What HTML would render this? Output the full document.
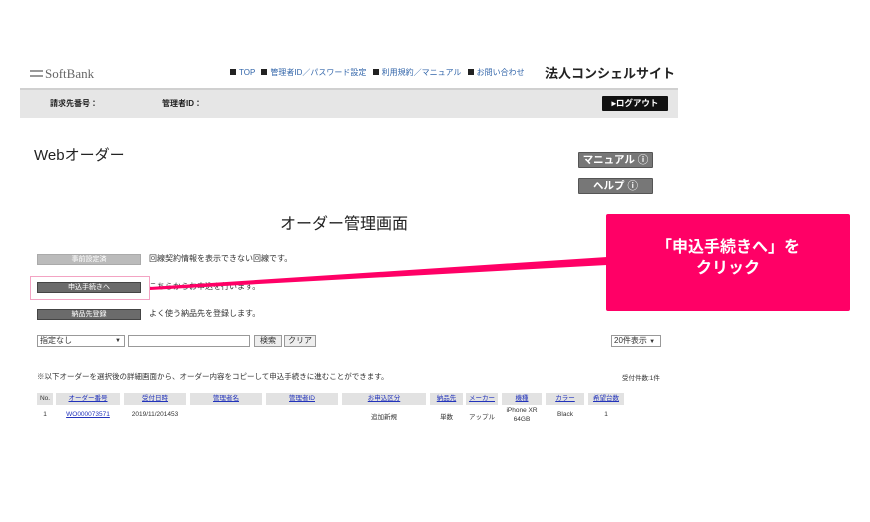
<!DOCTYPE html>
<html><head><meta charset="utf-8"><style>
*{margin:0;padding:0;box-sizing:border-box}
body{width:870px;height:522px;background:#fff;position:relative;overflow:hidden;font-family:"Liberation Sans","Noto Sans CJK JP",sans-serif;color:#333}
.a{position:absolute;white-space:nowrap}
.btn{position:absolute;background:#6b6b6b;color:#fff;font-size:7px;text-align:center;border:1px solid #444;line-height:10px}
.gb{position:absolute;background:#777;color:#fff;font-size:10.5px;font-weight:bold;text-align:center;border:1px solid #555;line-height:14px;border-radius:1px}
.th{position:absolute;top:393px;height:12px;background:#e2e2e2;color:#2233bb;font-size:6.5px;text-align:center;line-height:12px;text-decoration:underline}
.td{position:absolute;top:411px;font-size:6.5px;color:#333;text-align:center}
.nav{font-size:8px;color:#3366aa}
.sq{display:inline-block;width:6px;height:6px;background:#222;margin:0 3px 0 4px;vertical-align:0}
</style></head><body>
<div class="a" style="left:30px;top:66px;font-family:'Liberation Serif',serif;font-size:13px;color:#666"><span style="display:inline-block;width:13px;height:7px;border-top:2px solid #999;border-bottom:2px solid #999;margin-right:2px;vertical-align:1px"></span>SoftBank</div>
<div class="a nav" style="left:226px;top:67px"><span class="sq"></span>TOP <span class="sq"></span>管理者ID／パスワード設定 <span class="sq"></span>利用規約／マニュアル <span class="sq"></span>お問い合わせ</div>
<div class="a" style="left:545px;top:63px;font-size:13px;font-weight:bold;color:#222">法人コンシェルサイト</div>
<div class="a" style="left:20px;top:88px;width:658px;height:30px;background:#e6e6e6;border-top:2px solid #d0d0d0"></div>
<div class="a" style="left:50px;top:98px;font-size:8px;font-weight:bold;color:#222">請求先番号：</div>
<div class="a" style="left:162px;top:98px;font-size:8px;font-weight:bold;color:#222">管理者ID：</div>
<div class="a" style="left:602px;top:96px;width:66px;height:15px;background:#111;color:#fff;font-size:8.5px;font-weight:bold;text-align:center;line-height:15px;border-radius:1px">▸ログアウト</div>
<div class="a" style="left:34px;top:144px;font-size:15px;color:#222">Webオーダー</div>
<div class="gb" style="left:578px;top:152px;width:75px;height:16px">マニュアル ⓘ</div>
<div class="gb" style="left:578px;top:178px;width:75px;height:16px">ヘルプ ⓘ</div>
<div class="a" style="left:280px;top:210px;font-size:16px;color:#222">オーダー管理画面</div>
<div class="btn" style="left:37px;top:254px;width:104px;height:11px;background:#bbb;border-color:#aaa">事前設定済</div>
<div class="a" style="left:149px;top:253px;font-size:8px">回線契約情報を表示できない回線です。</div>
<div class="a" style="left:30px;top:276px;width:120px;height:24px;border:1px solid #f3a3c3"></div>
<div class="btn" style="left:37px;top:282px;width:104px;height:11px">申込手続きへ</div>
<div class="a" style="left:149px;top:281px;font-size:8px">こちらからお申込を行います。</div>
<div class="btn" style="left:37px;top:309px;width:104px;height:11px">納品先登録</div>
<div class="a" style="left:149px;top:308px;font-size:8px">よく使う納品先を登録します。</div>
<div class="a" style="left:37px;top:335px;width:88px;height:12px;border:1px solid #999;font-size:8px;line-height:10px;padding-left:2px">指定なし<span style="position:absolute;right:3px;font-size:6px">▼</span></div>
<div class="a" style="left:128px;top:335px;width:122px;height:12px;border:1px solid #999"></div>
<div class="a" style="left:254px;top:335px;width:28px;height:12px;border:1px solid #999;background:#eee;font-size:8px;text-align:center;line-height:10px">検索</div>
<div class="a" style="left:284px;top:335px;width:32px;height:12px;border:1px solid #999;background:#eee;font-size:8px;text-align:center;line-height:10px">クリア</div>
<div class="a" style="left:611px;top:335px;width:50px;height:12px;border:1px solid #999;font-size:8px;line-height:10px;padding-left:2px">20件表示 <span style="font-size:6px">▼</span></div>
<div class="a" style="left:37px;top:371px;font-size:7.5px">※以下オーダーを選択後の詳細画面から、オーダー内容をコピーして申込手続きに進むことができます。</div>
<div class="a" style="left:622px;top:372px;font-size:6.5px">受付件数:1件</div>
<div class="th" style="left:37px;width:16px;color:#333;text-decoration:none">No.</div>
<div class="th" style="left:56px;width:64px">オーダー番号</div>
<div class="th" style="left:124px;width:62px">受付日時</div>
<div class="th" style="left:190px;width:72px">管理者名</div>
<div class="th" style="left:266px;width:72px">管理者ID</div>
<div class="th" style="left:342px;width:84px">お申込区分</div>
<div class="th" style="left:430px;width:33px">納品先</div>
<div class="th" style="left:466px;width:32px">メーカー</div>
<div class="th" style="left:502px;width:40px">機種</div>
<div class="th" style="left:546px;width:38px">カラー</div>
<div class="th" style="left:588px;width:36px">希望台数</div>
<div class="td" style="left:37px;width:16px">1</div>
<div class="td" style="left:56px;width:64px;color:#2233bb;text-decoration:underline">WO000073571</div>
<div class="td" style="left:124px;width:62px">2019/11/201453</div>
<div class="td" style="left:342px;width:84px">追加新規</div>
<div class="td" style="left:430px;width:33px">単数</div>
<div class="td" style="left:466px;width:32px">アップル</div>
<div class="td" style="left:502px;top:406px;width:40px;line-height:9px">iPhone XR<br>64GB</div>
<div class="td" style="left:546px;width:38px">Black</div>
<div class="td" style="left:588px;width:36px">1</div>
<svg class="a" style="left:0;top:0" width="870" height="522"><polygon points="607,257 607,265 150,290 150,287" fill="#ff0066"/></svg>
<div class="a" style="left:606px;top:214px;width:244px;height:97px;background:#ff0066;border-radius:2px;color:#fff;font-weight:bold;font-size:16px;text-align:center;line-height:21px;padding-top:23px">「申込手続きへ」を<br>クリック</div>
</body></html>
